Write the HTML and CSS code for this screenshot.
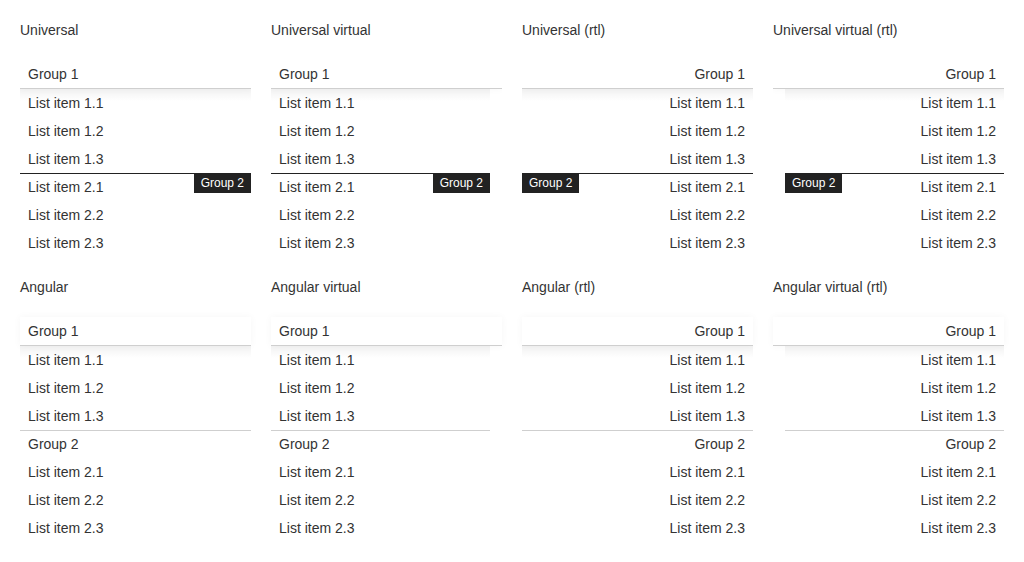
FILE: index.html
```html
<!DOCTYPE html>
<html>
<head>
<meta charset="utf-8">
<link rel="stylesheet" href="styles.css">
</head>
<body>
<div class="page">
  <section class="demo">
    <div class="demo-title">Universal</div>
    <div class="list list--clip">
      <div class="group-header">Group 1</div>
      <div class="body">
        <div class="item">List item 1.1</div>
        <div class="item">List item 1.2</div>
        <div class="item">List item 1.3</div>
        <div class="sticky-line"><span class="badge">Group 2</span></div>
        <div class="item">List item 2.1</div>
        <div class="item">List item 2.2</div>
        <div class="item">List item 2.3</div>
      </div>
    </div>
  </section>
  <section class="demo">
    <div class="demo-title">Universal virtual</div>
    <div class="list list--clip list--virtual">
      <div class="group-header">Group 1</div>
      <div class="body">
        <div class="item">List item 1.1</div>
        <div class="item">List item 1.2</div>
        <div class="item">List item 1.3</div>
        <div class="sticky-line"><span class="badge">Group 2</span></div>
        <div class="item">List item 2.1</div>
        <div class="item">List item 2.2</div>
        <div class="item">List item 2.3</div>
      </div>
    </div>
  </section>
  <section class="demo">
    <div class="demo-title">Universal (rtl)</div>
    <div class="list list--clip list--rtl" dir="rtl">
      <div class="group-header">Group 1</div>
      <div class="body">
        <div class="item">List item 1.1</div>
        <div class="item">List item 1.2</div>
        <div class="item">List item 1.3</div>
        <div class="sticky-line"><span class="badge">Group 2</span></div>
        <div class="item">List item 2.1</div>
        <div class="item">List item 2.2</div>
        <div class="item">List item 2.3</div>
      </div>
    </div>
  </section>
  <section class="demo">
    <div class="demo-title">Universal virtual (rtl)</div>
    <div class="list list--clip list--virtual list--rtl" dir="rtl">
      <div class="group-header">Group 1</div>
      <div class="body">
        <div class="item">List item 1.1</div>
        <div class="item">List item 1.2</div>
        <div class="item">List item 1.3</div>
        <div class="sticky-line"><span class="badge">Group 2</span></div>
        <div class="item">List item 2.1</div>
        <div class="item">List item 2.2</div>
        <div class="item">List item 2.3</div>
      </div>
    </div>
  </section>

  <section class="demo">
    <div class="demo-title">Angular</div>
    <div class="list">
      <div class="group-header">Group 1</div>
      <div class="body">
        <div class="item">List item 1.1</div>
        <div class="item">List item 1.2</div>
        <div class="item">List item 1.3</div>
        <div class="group-row">Group 2</div>
        <div class="item">List item 2.1</div>
        <div class="item">List item 2.2</div>
        <div class="item">List item 2.3</div>
      </div>
    </div>
  </section>
  <section class="demo">
    <div class="demo-title">Angular virtual</div>
    <div class="list list--virtual">
      <div class="group-header">Group 1</div>
      <div class="body">
        <div class="item">List item 1.1</div>
        <div class="item">List item 1.2</div>
        <div class="item">List item 1.3</div>
        <div class="group-row">Group 2</div>
        <div class="item">List item 2.1</div>
        <div class="item">List item 2.2</div>
        <div class="item">List item 2.3</div>
      </div>
    </div>
  </section>
  <section class="demo">
    <div class="demo-title">Angular (rtl)</div>
    <div class="list list--rtl" dir="rtl">
      <div class="group-header">Group 1</div>
      <div class="body">
        <div class="item">List item 1.1</div>
        <div class="item">List item 1.2</div>
        <div class="item">List item 1.3</div>
        <div class="group-row">Group 2</div>
        <div class="item">List item 2.1</div>
        <div class="item">List item 2.2</div>
        <div class="item">List item 2.3</div>
      </div>
    </div>
  </section>
  <section class="demo">
    <div class="demo-title">Angular virtual (rtl)</div>
    <div class="list list--virtual list--rtl" dir="rtl">
      <div class="group-header">Group 1</div>
      <div class="body">
        <div class="item">List item 1.1</div>
        <div class="item">List item 1.2</div>
        <div class="item">List item 1.3</div>
        <div class="group-row">Group 2</div>
        <div class="item">List item 2.1</div>
        <div class="item">List item 2.2</div>
        <div class="item">List item 2.3</div>
      </div>
    </div>
  </section>
</div>
</body>
</html>
```

FILE: styles.css
```css
* { box-sizing: border-box; }

html, body {
  margin: 0;
  padding: 0;
  background: #fff;
}

body {
  font-family: "Liberation Sans", Arial, sans-serif;
  font-size: 14px;
  color: #333;
}

.page {
  display: grid;
  grid-template-columns: repeat(4, 231px);
  column-gap: 20px;
  row-gap: 20px;
  padding: 20px;
  align-items: start;
}

.demo {
  display: flex;
  flex-direction: column;
  gap: 20px;
}

.demo-title {
  height: 20px;
  line-height: 20px;
}

.list {
  position: relative;
}

.list--clip {
  height: 197px;
  overflow: hidden;
}

.group-header {
  position: relative;
  z-index: 2;
  height: 29px;
  line-height: 28px;
  padding: 0 8px;
  background: #fff;
  border-bottom: 1px solid #cfcfcf;
  box-shadow: 0 0 8px rgba(0, 0, 0, 0.04);
}

.body {
  position: relative;
}

.list--virtual .body {
  margin-right: 12px;
}

.list--virtual.list--rtl .body {
  margin-right: 0;
  margin-left: 12px;
}

.body::before {
  content: "";
  position: absolute;
  top: 0;
  left: 0;
  right: 0;
  height: 12px;
  background: linear-gradient(rgba(0, 0, 0, 0.05), rgba(0, 0, 0, 0));
  pointer-events: none;
}

.item {
  height: 28px;
  line-height: 28px;
  padding: 0 8px;
}

.group-row {
  height: 28px;
  line-height: 26px;
  padding: 0 8px;
  border-top: 1px solid #cfcfcf;
}

.sticky-line {
  position: relative;
  z-index: 3;
  height: 1px;
  margin-bottom: -1px;
  background: #222;
}

.badge {
  position: absolute;
  top: 0;
  right: 0;
  height: 20px;
  line-height: 21px;
  padding: 0 7px;
  font-size: 12px;
  color: #fff;
  background: #222;
  white-space: nowrap;
}

.list--rtl .badge {
  right: auto;
  left: 0;
}
```
